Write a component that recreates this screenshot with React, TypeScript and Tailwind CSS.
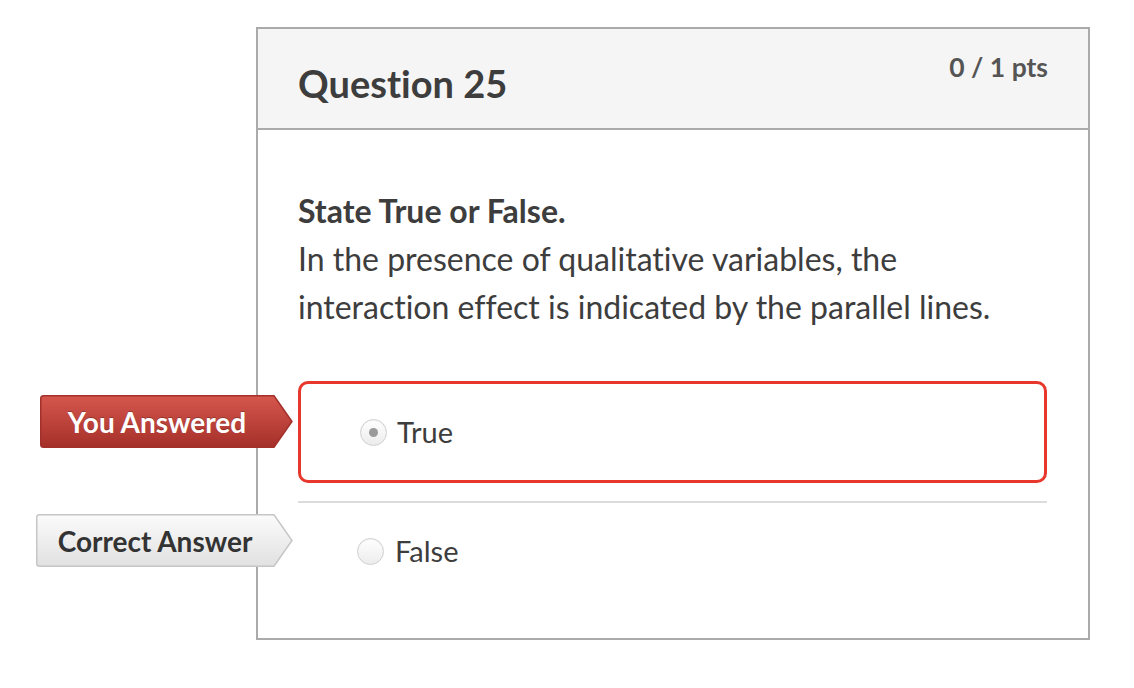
import React from "react";

const font = { fontFamily: "Lato, 'Noto Sans', sans-serif", fontVariantLigatures: "none" as const };

function Badge({ label, variant, width }: { label: string; variant: "red" | "gray"; width: number }) {
  const red = variant === "red";
  const body = width - 19;
  return (
    <div className="relative h-[53px]" style={{ width }}>
      <svg className="absolute inset-0" width={width} height="53" viewBox={`0 0 ${width} 53`}>
        <defs>
          <linearGradient id={`g-${variant}`} x1="0" y1="0" x2="0" y2="1">
            {red ? (
              <>
                <stop offset="0" stopColor="#d5574d" />
                <stop offset="1" stopColor="#a5302a" />
              </>
            ) : (
              <>
                <stop offset="0" stopColor="#fbfbfb" />
                <stop offset="1" stopColor="#e1e1e1" />
              </>
            )}
          </linearGradient>
        </defs>
        <path
          d={`M3.5 0.75 H${body} L${width - 1} 26.5 L${body} 52.25 H3.5 Q0.75 52.25 0.75 49.5 V3.5 Q0.75 0.75 3.5 0.75 Z`}
          fill={`url(#g-${variant})`}
          stroke={red ? "#a3312b" : "#c6c6c6"}
          strokeWidth="1.5"
        />
      </svg>
      <div
        className={`relative flex items-center justify-center h-full text-[28px] font-bold ${
          red ? "text-white [text-shadow:0_-1px_0_rgba(0,0,0,0.25)]" : "text-[#333]"
        }`}
        style={{ width: body }}
      >
        {label}
      </div>
    </div>
  );
}

function Radio({ checked }: { checked?: boolean }) {
  return (
    <span className="flex items-center justify-center w-[27px] h-[27px] rounded-full border border-[#cfcfcf] bg-gradient-to-b from-white to-[#ececec] shadow-[inset_0_1px_1px_rgba(0,0,0,0.05)]">
      {checked && <span className="w-[9px] h-[9px] rounded-full bg-[#9a9a9a]" />}
    </span>
  );
}

export default function App() {
  return (
    <div className="w-full h-[688px] bg-white text-[#333]" style={font}>
      <div className="pt-[27px] pl-[256px]">
        <div className="w-[834px] h-[613px] border-2 border-[#aaa]">
          <div className="h-[101px] bg-[#f5f5f5] border-b-2 border-[#aaa] flex justify-between items-start px-[40px]">
            <h2 className="mt-[35px] text-[38px] leading-none font-bold text-[#3d3d3d]">Question 25</h2>
            <div className="mt-[25px] text-[26.5px] leading-none font-bold text-[#555]">0 / 1 pts</div>
          </div>

          <div className="px-[40px] pt-[57px]">
            <div className="text-[32px] leading-[48px] text-[#3d3d3d]">
              <p className="font-bold">State True or False.</p>
              <p>
                In the presence of qualitative variables, the
                <br />
                interaction effect is indicated by the parallel lines.
              </p>
            </div>

            <div className="mt-[50px] w-[749px]">
              <div className="relative">
                <div className="absolute left-[-258px] top-[14px]">
                  <Badge label="You Answered" variant="red" width={253} />
                </div>
                <div className="h-[102px] border-[3px] border-[#e8372c] rounded-[10px] flex items-center pl-[59px] gap-[10px]">
                  <Radio checked />
                  <span className="text-[29px] text-[#3d3d3d]">True</span>
                </div>
              </div>

              <div className="mt-[18px] border-t-2 border-[#dcdcdc]" />

              <div className="relative">
                <div className="absolute left-[-262px] top-[11px]">
                  <Badge label="Correct Answer" variant="gray" width={257} />
                </div>
                <div className="h-[96px] flex items-center pl-[59px] gap-[11px]">
                  <Radio />
                  <span className="text-[29px] text-[#3d3d3d]">False</span>
                </div>
              </div>
            </div>
          </div>
        </div>
      </div>
    </div>
  );
}
